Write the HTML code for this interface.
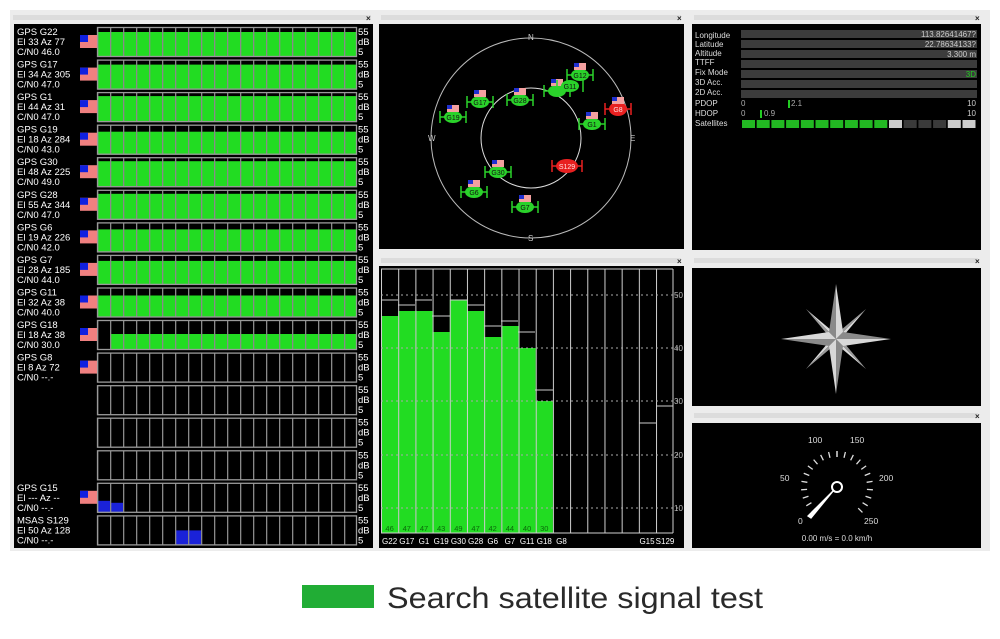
<!DOCTYPE html>
<html><head><meta charset="utf-8"><style>
html,body{margin:0;padding:0;background:#fff;width:1000px;height:639px;overflow:hidden}
svg{display:block}
text{font-family:"Liberation Sans",sans-serif}
</style></head><body>
<svg width="1000" height="639" viewBox="0 0 1000 639" xmlns="http://www.w3.org/2000/svg">
<defs>
<pattern id="pc" x="97" y="0" width="13" height="40" patternUnits="userSpaceOnUse"><rect x="0" y="0" width="1.3" height="40" fill="#8a8a8a"/></pattern>
<pattern id="pm" x="381" y="0" width="17.19" height="40" patternUnits="userSpaceOnUse"><rect x="0" y="0" width="1" height="40" fill="#d0d0d0"/></pattern>
<g id="fr"><rect x="97.5" y="1.5" width="259" height="29" fill="url(#pc)" stroke="#9a9a9a" stroke-width="1.3"/></g>
<g id="flag"><rect x="80" y="9" width="17" height="13" fill="#f08080"/><rect x="80" y="9" width="8" height="7" fill="#1020e0"/></g>
<g id="rl" fill="#fff" font-size="9.5"><text x="358" y="9">55</text><text x="358" y="19">dB</text><text x="358" y="29">5</text></g>
<g id="sf"><rect x="-6" y="-12" width="12" height="7" fill="#f4a0a0"/><rect x="-6" y="-12" width="5" height="4" fill="#2030d0"/></g>
</defs>
<rect x="10" y="10" width="980" height="541" fill="#ececec"/>
<g fill="#dcdcdc"><rect x="13" y="15" width="358" height="5"/><rect x="381" y="15" width="300" height="5"/><rect x="694" y="15" width="284" height="5"/><rect x="381" y="258" width="300" height="5"/><rect x="694" y="258" width="284" height="5"/><rect x="694" y="413" width="284" height="5"/></g>
<g fill="#222" font-size="8" font-weight="bold"><text x="366" y="21">×</text><text x="677" y="21">×</text><text x="975" y="21">×</text><text x="677" y="264">×</text><text x="975" y="264">×</text><text x="975" y="419">×</text></g>

<rect x="14" y="24" width="359" height="524" fill="#000"/>
<g fill="#fff" font-size="9.5">
<g transform="translate(0,26)"><rect x="98" y="6" width="259" height="25" fill="#22dc22"/><use href="#fr"/><use href="#rl"/><use href="#flag"/><text x="17" y="9">GPS G22</text><text x="17" y="19">El 33 Az 77</text><text x="17" y="29">C/N0 46.0</text></g>
<g transform="translate(0,58.6)"><rect x="98" y="6" width="259" height="25" fill="#22dc22"/><use href="#fr"/><use href="#rl"/><use href="#flag"/><text x="17" y="9">GPS G17</text><text x="17" y="19">El 34 Az 305</text><text x="17" y="29">C/N0 47.0</text></g>
<g transform="translate(0,91.1)"><rect x="98" y="5" width="259" height="26" fill="#22dc22"/><use href="#fr"/><use href="#rl"/><use href="#flag"/><text x="17" y="9">GPS G1</text><text x="17" y="19">El 44 Az 31</text><text x="17" y="29">C/N0 47.0</text></g>
<g transform="translate(0,123.7)"><rect x="98" y="8" width="259" height="23" fill="#22dc22"/><use href="#fr"/><use href="#rl"/><use href="#flag"/><text x="17" y="9">GPS G19</text><text x="17" y="19">El 18 Az 284</text><text x="17" y="29">C/N0 43.0</text></g>
<g transform="translate(0,156.2)"><rect x="98" y="5" width="259" height="26" fill="#22dc22"/><use href="#fr"/><use href="#rl"/><use href="#flag"/><text x="17" y="9">GPS G30</text><text x="17" y="19">El 48 Az 225</text><text x="17" y="29">C/N0 49.0</text></g>
<g transform="translate(0,188.8)"><rect x="98" y="5" width="259" height="26" fill="#22dc22"/><use href="#fr"/><use href="#rl"/><use href="#flag"/><text x="17" y="9">GPS G28</text><text x="17" y="19">El 55 Az 344</text><text x="17" y="29">C/N0 47.0</text></g>
<g transform="translate(0,221.4)"><rect x="98" y="8" width="259" height="23" fill="#22dc22"/><use href="#fr"/><use href="#rl"/><use href="#flag"/><text x="17" y="9">GPS G6</text><text x="17" y="19">El 19 Az 226</text><text x="17" y="29">C/N0 42.0</text></g>
<g transform="translate(0,253.9)"><rect x="98" y="7" width="259" height="24" fill="#22dc22"/><use href="#fr"/><use href="#rl"/><use href="#flag"/><text x="17" y="9">GPS G7</text><text x="17" y="19">El 28 Az 185</text><text x="17" y="29">C/N0 44.0</text></g>
<g transform="translate(0,286.5)"><rect x="98" y="9" width="259" height="22" fill="#22dc22"/><use href="#fr"/><use href="#rl"/><use href="#flag"/><text x="17" y="9">GPS G11</text><text x="17" y="19">El 32 Az 38</text><text x="17" y="29">C/N0 40.0</text></g>
<g transform="translate(0,319)"><rect x="110" y="15" width="247" height="16" fill="#22dc22"/><use href="#fr"/><use href="#rl"/><use href="#flag"/><text x="17" y="9">GPS G18</text><text x="17" y="19">El 18 Az 38</text><text x="17" y="29">C/N0 30.0</text></g>
<g transform="translate(0,351.6)"><use href="#fr"/><use href="#rl"/><use href="#flag"/><text x="17" y="9">GPS G8</text><text x="17" y="19">El 8 Az 72</text><text x="17" y="29">C/N0 --.-</text></g>
<g transform="translate(0,384.2)"><use href="#fr"/><use href="#rl"/></g>
<g transform="translate(0,416.7)"><use href="#fr"/><use href="#rl"/></g>
<g transform="translate(0,449.3)"><use href="#fr"/><use href="#rl"/></g>
<g transform="translate(0,481.8)"><rect x="98" y="19" width="13" height="12" fill="#1a22d8"/><rect x="111" y="21" width="13" height="10" fill="#1a22d8"/><use href="#fr"/><use href="#rl"/><use href="#flag"/><text x="17" y="9">GPS G15</text><text x="17" y="19">El --- Az --</text><text x="17" y="29">C/N0 --.-</text></g>
<g transform="translate(0,514.4)"><rect x="175" y="16" width="26" height="15" fill="#1a22d8"/><use href="#fr"/><use href="#rl"/><text x="17" y="9">MSAS S129</text><text x="17" y="19">El 50 Az 128</text><text x="17" y="29">C/N0 --.-</text></g>
</g>

<rect x="379" y="24" width="305" height="225" fill="#000"/>
<circle cx="531" cy="138" r="100" fill="none" stroke="#bbb" stroke-width="1"/>
<circle cx="531" cy="138" r="50" fill="none" stroke="#ddd" stroke-width="1"/>
<g fill="#ccc" font-size="8"><text x="528" y="40">N</text><text x="428" y="141">W</text><text x="630" y="141">E</text><text x="528" y="241">S</text></g>
<g font-size="7" text-anchor="middle">
<g transform="translate(580,75)"><ellipse rx="9" ry="6" fill="#2ad22a"/><path d="M-13 -6V6M13 -6V6M-13 0H13" stroke="#2ad22a" stroke-width="1.5"/><use href="#sf"/><text y="3" fill="#111">G12</text></g>
<g transform="translate(557,91)"><ellipse rx="9" ry="6" fill="#2ad22a"/><path d="M-13 -6V6M13 -6V6M-13 0H13" stroke="#2ad22a" stroke-width="1.5"/><use href="#sf"/></g>
<g transform="translate(570,86)"><ellipse rx="9" ry="6" fill="#2ad22a"/><path d="M-13 -6V6M13 -6V6" stroke="#2ad22a" stroke-width="1.5"/><text y="3" fill="#111">G11</text></g>
<g transform="translate(520,100)"><ellipse rx="9" ry="6" fill="#2ad22a"/><path d="M-13 -6V6M13 -6V6M-13 0H13" stroke="#2ad22a" stroke-width="1.5"/><use href="#sf"/><text y="3" fill="#111">G28</text></g>
<g transform="translate(480,102)"><ellipse rx="9" ry="6" fill="#2ad22a"/><path d="M-13 -6V6M13 -6V6M-13 0H13" stroke="#2ad22a" stroke-width="1.5"/><use href="#sf"/><text y="3" fill="#111">G17</text></g>
<g transform="translate(453,117)"><ellipse rx="9" ry="6" fill="#2ad22a"/><path d="M-13 -6V6M13 -6V6M-13 0H13" stroke="#2ad22a" stroke-width="1.5"/><use href="#sf"/><text y="3" fill="#111">G19</text></g>
<g transform="translate(592,124)"><ellipse rx="9" ry="6" fill="#2ad22a"/><path d="M-13 -6V6M13 -6V6M-13 0H13" stroke="#2ad22a" stroke-width="1.5"/><use href="#sf"/><text y="3" fill="#111">G1</text></g>
<g transform="translate(498,172)"><ellipse rx="9" ry="6" fill="#2ad22a"/><path d="M-13 -6V6M13 -6V6M-13 0H13" stroke="#2ad22a" stroke-width="1.5"/><use href="#sf"/><text y="3" fill="#111">G30</text></g>
<g transform="translate(474,192)"><ellipse rx="9" ry="6" fill="#2ad22a"/><path d="M-13 -6V6M13 -6V6M-13 0H13" stroke="#2ad22a" stroke-width="1.5"/><use href="#sf"/><text y="3" fill="#111">G6</text></g>
<g transform="translate(525,207)"><ellipse rx="9" ry="6" fill="#2ad22a"/><path d="M-13 -6V6M13 -6V6M-13 0H13" stroke="#2ad22a" stroke-width="1.5"/><use href="#sf"/><text y="3" fill="#111">G7</text></g>
<g transform="translate(618,109)"><ellipse rx="9" ry="7" fill="#e82020"/><path d="M-13 -6V6M13 -6V6M-13 0H13" stroke="#e82020" stroke-width="1.5"/><use href="#sf"/><text y="3" fill="#fdd">G8</text></g>
<g transform="translate(567,166)"><ellipse rx="11" ry="7" fill="#e82020"/><path d="M-15 -6V6M15 -6V6M-15 0H15" stroke="#e82020" stroke-width="1.5"/><text y="3" fill="#fdd">S129</text></g>
</g>

<rect x="379" y="266" width="305" height="282" fill="#000"/>
<g fill="#22dc22">
<rect x="381" y="316" width="17.2" height="217"/><rect x="398.2" y="311" width="17.2" height="222"/><rect x="415.4" y="311" width="17.2" height="222"/><rect x="432.6" y="332" width="17.2" height="201"/><rect x="449.8" y="300" width="17.2" height="233"/><rect x="467" y="311" width="17.2" height="222"/><rect x="484.1" y="337" width="17.2" height="196"/><rect x="501.3" y="326" width="17.2" height="207"/><rect x="518.5" y="348" width="17.2" height="185"/><rect x="535.7" y="401" width="17.2" height="132"/>
</g>
<g stroke="#ccc" stroke-width="1" fill="none">
<path d="M381 300H398M398 305H415M415 300H432M432 316H450M450 300H467M467 305H484M484 326H501M501 321H518M518 332H535M535 390H553M639 423H656M656 406H673"/>
</g>
<rect x="381" y="269" width="292" height="264" fill="url(#pm)"/>
<path d="M673 269V533M381 269H673M381 533H673" stroke="#d0d0d0"/>
<g stroke="#aaa" stroke-dasharray="2 3"><path d="M381 295H680M381 348H680M381 401H680M381 455H680M381 508H680"/></g>
<g fill="#bbb" font-size="8"><text x="674" y="298">50</text><text x="674" y="351">40</text><text x="674" y="404">30</text><text x="674" y="458">20</text><text x="674" y="511">10</text></g>
<g fill="#0a6a0a" font-size="7.5" text-anchor="middle"><text x="389.6" y="531">46</text><text x="406.8" y="531">47</text><text x="424" y="531">47</text><text x="441.2" y="531">43</text><text x="458.4" y="531">49</text><text x="475.6" y="531">47</text><text x="492.7" y="531">42</text><text x="509.9" y="531">44</text><text x="527.1" y="531">40</text><text x="544.3" y="531">30</text></g>
<g fill="#fff" font-size="8" text-anchor="middle"><text x="389.6" y="544">G22</text><text x="406.8" y="544">G17</text><text x="424" y="544">G1</text><text x="441.2" y="544">G19</text><text x="458.4" y="544">G30</text><text x="475.6" y="544">G28</text><text x="492.7" y="544">G6</text><text x="509.9" y="544">G7</text><text x="527.1" y="544">G11</text><text x="544.3" y="544">G18</text><text x="561.5" y="544">G8</text><text x="647" y="544">G15</text><text x="665" y="544">S129</text></g>

<rect x="692" y="24" width="289" height="226" fill="#000"/>
<g fill="#3c3c3c"><rect x="741" y="30" width="236" height="8"/><rect x="741" y="40" width="236" height="8"/><rect x="741" y="50" width="236" height="8"/><rect x="741" y="60" width="236" height="8"/><rect x="741" y="70" width="236" height="8"/><rect x="741" y="80" width="236" height="8"/><rect x="741" y="90" width="236" height="8"/></g>
<g fill="#ddd" font-size="8"><text x="695" y="38">Longitude</text><text x="695" y="47">Latitude</text><text x="695" y="56">Altitude</text><text x="695" y="65">TTFF</text><text x="695" y="75">Fix Mode</text><text x="695" y="85">3D Acc.</text><text x="695" y="95">2D Acc.</text><text x="695" y="106">PDOP</text><text x="695" y="116">HDOP</text><text x="695" y="126">Satellites</text></g>
<g fill="#ccc" font-size="8" text-anchor="end"><text x="976" y="37">113.82641467?</text><text x="976" y="47">22.78634133?</text><text x="976" y="57">3.300 m</text><text x="976" y="77" fill="#2c2">3D</text><text x="976" y="106">10</text><text x="976" y="116">10</text></g>
<g fill="#aaa" font-size="8"><text x="741" y="106">0</text><text x="741" y="116">0</text><text x="791" y="106">2.1</text><text x="764" y="116">0.9</text></g>
<rect x="788" y="100" width="2" height="8" fill="#2c2"/><rect x="760" y="110" width="2" height="8" fill="#2c2"/>
<g fill="#22b822"><rect x="742" y="120" width="13" height="8"/><rect x="756.7" y="120" width="13" height="8"/><rect x="771.4" y="120" width="13" height="8"/><rect x="786.1" y="120" width="13" height="8"/><rect x="800.8" y="120" width="13" height="8"/><rect x="815.5" y="120" width="13" height="8"/><rect x="830.2" y="120" width="13" height="8"/><rect x="844.9" y="120" width="13" height="8"/><rect x="859.6" y="120" width="13" height="8"/><rect x="874.3" y="120" width="13" height="8"/></g>
<g><rect x="889" y="120" width="13" height="8" fill="#ccc"/><rect x="903.7" y="120" width="13" height="8" fill="#3a3a3a"/><rect x="918.4" y="120" width="13" height="8" fill="#3a3a3a"/><rect x="933.1" y="120" width="13" height="8" fill="#3a3a3a"/><rect x="947.8" y="120" width="13" height="8" fill="#ccc"/><rect x="962.5" y="120" width="13" height="8" fill="#ccc"/></g>

<rect x="692" y="268" width="289" height="138" fill="#000"/>
<g transform="translate(836,339)">
<g fill="#d8d8d8">
<path d="M0 0L-30 -30L-5 -9Z M0 0L30 -30L9 -5Z M0 0L-30 30L-9 5Z M0 0L30 30L5 9Z"/>
<path d="M0 0L-9 -5L-30 -30Z M0 0L5 -9L30 -30Z M0 0L9 5L30 30Z M0 0L-5 9L-30 30Z" fill="#9a9a9a"/>
<path d="M0 -55L7 -7L0 0Z M0 55L-7 7L0 0Z M-55 0L-7 -7L0 0Z M55 0L7 7L0 0Z"/>
<path d="M0 -55L-7 -7L0 0Z M0 55L7 7L0 0Z M-55 0L-7 7L0 0Z M55 0L7 -7L0 0Z" fill="#8a8a8a"/>
</g></g>

<rect x="692" y="423" width="289" height="125" fill="#000"/>
<g transform="translate(837,487)" stroke="#ddd" stroke-width="1.3">
<g id="tk"><path d="M0 -36V-30"/></g>
<use href="#tk" transform="rotate(-135)"/><use href="#tk" transform="rotate(-121.5)"/><use href="#tk" transform="rotate(-108)"/><use href="#tk" transform="rotate(-94.5)"/><use href="#tk" transform="rotate(-81)"/><use href="#tk" transform="rotate(-67.5)"/><use href="#tk" transform="rotate(-54)"/><use href="#tk" transform="rotate(-40.5)"/><use href="#tk" transform="rotate(-27)"/><use href="#tk" transform="rotate(-13.5)"/><use href="#tk" transform="rotate(0)"/><use href="#tk" transform="rotate(13.5)"/><use href="#tk" transform="rotate(27)"/><use href="#tk" transform="rotate(40.5)"/><use href="#tk" transform="rotate(54)"/><use href="#tk" transform="rotate(67.5)"/><use href="#tk" transform="rotate(81)"/><use href="#tk" transform="rotate(94.5)"/><use href="#tk" transform="rotate(108)"/><use href="#tk" transform="rotate(121.5)"/><use href="#tk" transform="rotate(135)"/>
<path d="M-29 29L-3 3L-26 31Z" fill="#fff" stroke="#fff"/>
<circle cx="0" cy="0" r="5" fill="none" stroke="#fff" stroke-width="2"/>
</g>
<g fill="#ddd" font-size="8.5"><text x="808" y="443">100</text><text x="850" y="443">150</text><text x="780" y="481">50</text><text x="879" y="481">200</text><text x="798" y="524">0</text><text x="864" y="524">250</text><text x="837" y="541" text-anchor="middle" font-size="8">0.00 m/s = 0.0 km/h</text></g>

<rect x="302" y="585" width="72" height="23" fill="#21ad35"/>
<text x="387" y="608" font-size="30" fill="#2a2a2a" textLength="376" lengthAdjust="spacingAndGlyphs">Search satellite signal test</text>
</svg>
</body></html>
